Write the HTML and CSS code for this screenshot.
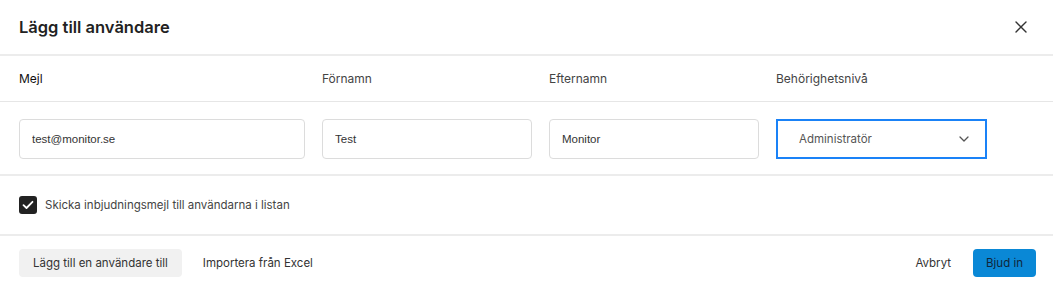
FILE: index.html
```html
<!DOCTYPE html>
<html lang="sv">
<head>
  <meta charset="UTF-8">
  <title>Lägg till användare</title>
  <link rel="stylesheet" href="styles.css">
</head>
<body>
  <div class="dialog">
    <!-- Header -->
    <div class="dialog-header">
      <h2 class="dialog-title">Lägg till användare</h2>
      <button class="close-button" aria-label="Stäng">
        <svg width="12" height="12" viewBox="0 0 12 12">
          <path d="M1 1L11 11M11 1L1 11" stroke="#333" stroke-width="1.4" stroke-linecap="round"/>
        </svg>
      </button>
    </div>

    <!-- Column labels -->
    <div class="row labels">
      <div class="label label-strong">Mejl</div>
      <div class="label">Förnamn</div>
      <div class="label">Efternamn</div>
      <div class="label">Behörighetsnivå</div>
    </div>

    <!-- User row -->
    <div class="row inputs">
      <input class="field" type="text" value="test@monitor.se">
      <input class="field" type="text" value="Test">
      <input class="field" type="text" value="Monitor">
      <div class="select">
        <span>Administratör</span>
        <svg width="10" height="6" viewBox="0 0 10 6">
          <path d="M1 1L5 5L9 1" fill="none" stroke="#555" stroke-width="1.3" stroke-linecap="round" stroke-linejoin="round"/>
        </svg>
      </div>
    </div>

    <!-- Invite option -->
    <div class="option-row">
      <span class="checkbox">
        <svg width="12" height="10" viewBox="0 0 12 10">
          <path d="M1.5 5.2L4.5 8L10.5 1.8" fill="none" stroke="#fff" stroke-width="1.8" stroke-linecap="round" stroke-linejoin="round"/>
        </svg>
      </span>
      <span class="option-text">Skicka inbjudningsmejl till användarna i listan</span>
    </div>

    <!-- Footer -->
    <div class="dialog-footer">
      <div class="footer-left">
        <button class="btn btn-gray">Lägg till en användare till</button>
        <button class="btn btn-text">Importera från Excel</button>
      </div>
      <div class="footer-right">
        <button class="btn btn-text">Avbryt</button>
        <button class="btn btn-primary">Bjud in</button>
      </div>
    </div>
  </div>
</body>
</html>
```

FILE: styles.css
```css
html, body {
  margin: 0;
  padding: 0;
  background-color: #ffffff;
  font-family: Inter, "Noto Sans", sans-serif;
  color: #222;
}

.dialog {
  width: 1053px;
  height: 288px;
  overflow: hidden;
}

.dialog-header {
  height: 54px;
  display: flex;
  align-items: center;
  justify-content: space-between;
  padding: 0 26px 0 19px;
  border-bottom: 2px solid #ececec;
}

.dialog-title {
  margin: 0;
  font-size: 16.5px;
  font-weight: 600;
  color: #222;
}

.close-button {
  background: none;
  border: none;
  padding: 0;
  display: flex;
  cursor: pointer;
}

.row {
  display: grid;
  grid-template-columns: 286px 210px 210px 211px;
  column-gap: 17px;
  padding-left: 19px;
}

.labels {
  height: 45px;
  align-items: center;
  border-bottom: 1px solid #e6e6e6;
}

.label {
  font-size: 12px;
  color: #444;
}

.label-strong {
  color: #111;
}

.inputs {
  padding-top: 17px;
  padding-bottom: 15px;
  align-items: center;
  border-bottom: 2px solid #ececec;
}

.field {
  box-sizing: border-box;
  height: 40px;
  padding: 0 12px;
  border: 1px solid #dcdcdc;
  border-radius: 4px;
  font-family: "Liberation Sans", Arial, sans-serif;
  font-size: 11.5px;
  color: #333;
  outline: none;
}

.select {
  box-sizing: border-box;
  height: 40px;
  display: flex;
  align-items: center;
  justify-content: space-between;
  padding: 0 16px 0 21px;
  border: 2px solid #1a82f7;
  font-size: 11.5px;
  color: #555;
}

.option-row {
  height: 58px;
  display: flex;
  align-items: center;
  gap: 8px;
  padding-left: 19px;
  border-bottom: 2px solid #ececec;
}

.checkbox {
  width: 18px;
  height: 18px;
  border-radius: 3px;
  background-color: #222;
  display: flex;
  align-items: center;
  justify-content: center;
}

.option-text {
  font-size: 11.5px;
  color: #444;
}

.dialog-footer {
  display: flex;
  justify-content: space-between;
  align-items: center;
  padding: 13px 17px 0 19px;
}

.footer-left,
.footer-right {
  display: flex;
  align-items: center;
  gap: 8px;
}

.footer-right {
  gap: 9px;
}

.btn {
  height: 28px;
  padding: 0 13px;
  border: none;
  border-radius: 4px;
  font-family: Inter, "Noto Sans", sans-serif;
  font-size: 11.5px;
  color: #333;
  background: none;
  cursor: pointer;
}

.btn-gray {
  background-color: #f1f1f1;
  padding: 0 14px;
}

.btn-primary {
  background-color: #0a88d6;
  color: #10263a;
}
```
